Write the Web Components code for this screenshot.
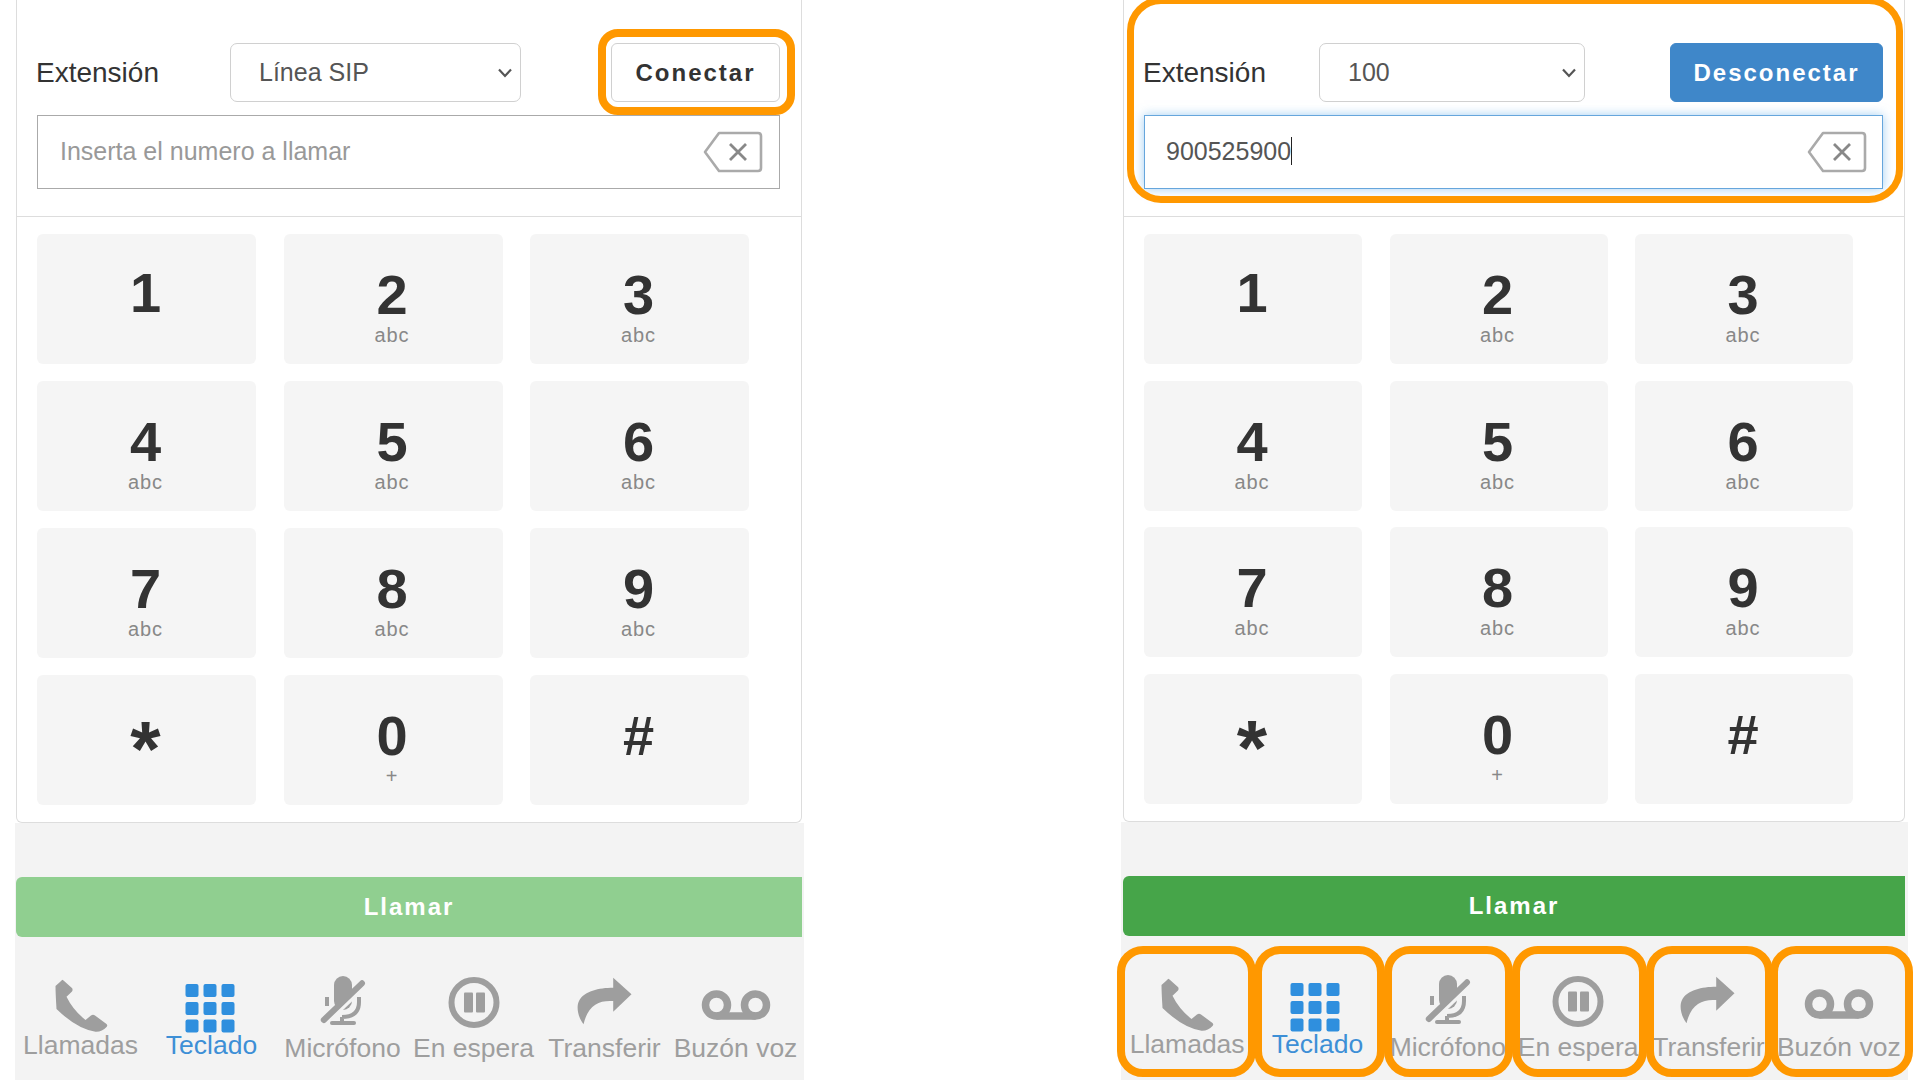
<!DOCTYPE html>
<html lang="es">
<head>
<meta charset="utf-8">
<title>Teclado SIP</title>
<style>
  html, body { margin: 0; height: 100%; background: #fff; }
  body { font-family: "Liberation Sans", Arial, sans-serif; overflow: hidden; }
</style>
</head>
<body>
<softphone-page></softphone-page>

<script>
// Icons of the bottom dock, all drawn in the same 80x60 box
const ICONS = {
  phone: `<path d="M21.8 5.7 30.2 13.3Q31 15 30 16.5L24.5 21.7Q31 35 43.5 45L49 40.5Q51 39 53 40.5L64.5 49Q66 50.5 64.5 52 60 57 53.5 56.7 35 54 14.5 34 13.5 18.3 13.5 11 19 6 20.5 4.8 21.8 5.7Z"/>`,
  grid: [9, 27, 44.5].map(y => [12.5, 30.5, 48.5].map(x =>
    `<rect x="${x}" y="${y}" width="13" height="13" rx="2"/>`).join('')).join(''),
  mic: `<path d="M30 10a9 9 0 0 1 18 0V26a9 9 0 0 1-18 0Z"/>
    <path d="M59 10.5 21 46.5" stroke="#f3f3f3" stroke-width="8"/>
    <path d="M58 8.3 19.8 45" stroke="currentColor" stroke-width="6" stroke-linecap="round"/>
    <path d="M55 22V27Q55 42 38 42M23 22V31M38 42V47" fill="none" stroke="currentColor" stroke-width="4"/>
    <path d="M28 48H50" stroke="currentColor" stroke-width="4" stroke-linecap="round"/>`,
  pause: `<circle cx="39" cy="27.5" r="22.5" fill="none" stroke="currentColor" stroke-width="6"/>
    <rect x="29" y="17.5" width="9" height="20" rx="1"/><rect x="41" y="17.5" width="9" height="20" rx="1"/>`,
  forward: `<path d="M47.2 2.7 65.5 19.3 47.2 36.7V26C33 25 22 30 17.5 49.3 12 42 10 32 13 26 18 16 33 12.7 47.2 12.7Z"/>`,
  voicemail: `<g fill="none" stroke="currentColor" stroke-width="7.5"><circle cx="19.5" cy="30" r="11"/><circle cx="58.5" cy="30" r="11"/><path d="M19.5 41H58.5"/></g>`
};

// One key of the dial pad: the digit goes in the slot, the letters in "sub"
class DialKey extends HTMLElement {
  connectedCallback() {
    const sub = this.getAttribute('sub');
    this.attachShadow({ mode: 'open' }).innerHTML = `
      <style>
        :host {
          display: block;
          height: var(--key-h);
          padding: 33px 2px 0 0;
          box-sizing: border-box;
          background: #f5f5f5;
          border-radius: 6px;
          text-align: center;
        }
        .digit { display: block; font-size: 56px; line-height: 56px; font-weight: 700; color: #333; }
        .sub { display: block; font-size: 20px; line-height: 24px; color: #888; letter-spacing: 1px; }
        :host([lift]) .digit { margin-top: -2px; }
        :host([star]) .digit { font-size: 78px; line-height: 78px; margin-top: 2px; }
      </style>
      <span class="digit"><slot></slot></span>
      ${sub ? `<span class="sub">${sub}</span>` : ''}
    `;
  }
}

// Entry of the bottom dock
class DockTab extends HTMLElement {
  connectedCallback() {
    this.attachShadow({ mode: 'open' }).innerHTML = `
      <style>
        :host {
          display: flex;
          flex-direction: column;
          align-items: center;
          position: relative;
          min-width: 0;
          color: #9e9e9e;
          padding-top: 38px;
        }
        :host([active]) { color: #2f8fde; }
        svg { display: block; flex: none; fill: currentColor; }
        .label {
          font-size: 26.5px;
          line-height: 30px;
          white-space: nowrap;
          margin: -5px 2px 0 0;
        }
        :host([active]) .label { color: #3d8fd6; }
        :host([low]) .label { margin-top: -2px; }
        /* orange annotation drawn on the screenshot */
        :host([mark])::after {
          content: '';
          position: absolute;
          top: 10px;
          height: 131px;
          left: var(--mark-l, 0);
          right: var(--mark-r, 0);
          box-sizing: border-box;
          border: 8px solid #ff9800;
          border-radius: 26px;
        }
      </style>
      <svg width="80" height="60" viewBox="0 0 80 60">${ICONS[this.getAttribute('icon')]}</svg>
      <span class="label"><slot></slot></span>
    `;
  }
}

// One whole softphone column
class PhonePanel extends HTMLElement {
  connectedCallback() {
    const connected = this.hasAttribute('connected');
    const keys = [
      ['1', '', 'lift'], ['2', 'abc'], ['3', 'abc'],
      ['4', 'abc'], ['5', 'abc'], ['6', 'abc'],
      ['7', 'abc'], ['8', 'abc'], ['9', 'abc'],
      ['*', '', 'star'], ['0', '+'], ['#', '']
    ];
    const marks = [['-6px', '-3px'], ['1px', '-1px'], ['0px', '1px'], ['-2px', '-3px'], ['2px', '2px'], ['-5px', '-8px']];
    const tabs = [
      ['phone', 'Llamadas', ''], ['grid', 'Teclado', 'active'], ['mic', 'Micrófono', 'low'],
      ['pause', 'En espera', 'low'], ['forward', 'Transferir', 'low'], ['voicemail', 'Buzón voz', 'low']
    ];

    this.attachShadow({ mode: 'open' }).innerHTML = `
      <style>
        :host { display: block; width: var(--panel-w); flex: none; color: #333; }
        .card {
          margin: 0 var(--inset-r) 0 var(--inset-l);
          background: #fff;
          border: 1px solid #ddd;
          border-top: 0;
          border-radius: 0 0 6px 6px;
        }
        .head {
          position: relative;
          padding: 43px 21px 27px 20px;
          border-bottom: 1px solid #ddd;
        }
        .row { display: flex; align-items: center; height: 59px; margin-bottom: 13px; }
        .ext { flex: 0 0 var(--label-w); font-size: 28px; margin-left: -1px; }
        .select {
          width: var(--select-w);
          height: 100%;
          box-sizing: border-box;
          display: flex;
          align-items: center;
          justify-content: space-between;
          padding: 0 6px 0 28px;
          border: 1px solid #d0d0d0;
          border-radius: 7px;
          background: #fff;
          font-size: 25px;
          color: #555;
        }
        .btn {
          position: relative;
          margin-left: auto;
          width: var(--btn-w);
          height: 100%;
          box-sizing: border-box;
          display: flex;
          align-items: center;
          justify-content: center;
          border: 1px solid #d0d0d0;
          border-radius: 6px;
          font-size: 24px;
          font-weight: 700;
          letter-spacing: 2px;
          color: #333;
          background: #fff;
        }
        .btn.on { background: #3f87c9; border-color: #3f87c9; color: #fff; }
        .btn.mark::after {
          content: '';
          position: absolute;
          inset: -15px -16px -14px -14px;
          border: 8px solid #ff9800;
          border-radius: 20px;
        }
        .number {
          height: 74px;
          box-sizing: border-box;
          display: flex;
          align-items: center;
          justify-content: space-between;
          padding: 0 16px 1px 22px;
          border: 1px solid #aaa;
          font-size: 25px;
          color: #999;
        }
        .number.on {
          padding-left: 21px;
          padding-right: 15px;
          border-color: #66a6dc;
          color: #555;
          box-shadow: 0 0 10px rgba(102, 175, 233, .6);
        }
        .caret { display: inline-block; width: 1px; height: 28px; background: #222; vertical-align: -5px; }
        .head.mark::after {
          content: '';
          position: absolute;
          inset: -3px 1px 13px 3px;
          border: 7px solid #ff9800;
          border-radius: 34px;
        }
        .pad {
          display: grid;
          grid-template-columns: repeat(3, var(--key-w));
          column-gap: var(--key-gap);
          row-gap: var(--row-gap);
          padding: 17px 0 17px 20px;
        }
        .dock { background: #f3f3f3; height: var(--dock-h); padding-top: 54px; box-sizing: border-box; }
        .call {
          margin: 0 var(--inset-r) 0 var(--inset-l);
          height: 60px;
          display: flex;
          align-items: center;
          justify-content: center;
          border-radius: 6px 0 0 6px;
          background: var(--call-bg);
          color: #fff;
          font-size: 24px;
          font-weight: 700;
          letter-spacing: 2px;
        }
        .tabs {
          margin: 0 var(--inset-r) 0 var(--inset-l);
          display: grid;
          grid-template-columns: repeat(6, 1fr);
        }
      </style>

      <div class="card">
        <div class="head ${connected ? 'mark' : ''}">
          <div class="row">
            <span class="ext">Extensión</span>
            <div class="select">
              <span>${this.getAttribute('line')}</span>
              <svg width="18" height="12" viewBox="0 0 18 12"><path d="M3 2.5 9 9l6-6.5" fill="none" stroke="#555" stroke-width="2.2"/></svg>
            </div>
            <div class="btn ${connected ? 'on' : 'mark'}">${connected ? 'Desconectar' : 'Conectar'}</div>
          </div>
          <div class="number ${connected ? 'on' : ''}">
            <span>${connected ? `${this.getAttribute('number')}<span class="caret"></span>` : 'Inserta el numero a llamar'}</span>
            <svg width="60" height="42" viewBox="0 0 60 42">
              <path d="M16 2H55Q58 2 58 5V37Q58 40 55 40H16L2 21Z" fill="none" stroke="#aaa" stroke-width="2.6" stroke-linejoin="round"/>
              <path d="M27 13 43 29M43 13 27 29" fill="none" stroke="#888" stroke-width="2.8"/>
            </svg>
          </div>
        </div>
        <div class="pad">
          ${keys.map(([d, s, flag]) => `<dial-key ${s ? `sub="${s}"` : ''} ${flag || ''}>${d}</dial-key>`).join('')}
        </div>
      </div>

      <div class="dock">
        <div class="call">Llamar</div>
        <div class="tabs">
          ${tabs.map(([icon, text, flag], i) => `<dock-tab icon="${icon}" ${flag} ${connected ? `mark style="--mark-l:${marks[i][0]};--mark-r:${marks[i][1]}"` : ''}>${text}</dock-tab>`).join('')}
        </div>
      </div>
    `;
  }
}

// The two screens side by side
class SoftphonePage extends HTMLElement {
  connectedCallback() {
    this.attachShadow({ mode: 'open' }).innerHTML = `
      <style>
        :host {
          display: flex;
          justify-content: space-between;
          align-items: flex-start;
          padding: 0 12px 0 15px;
          height: 1080px;
          box-sizing: border-box;
        }
        .off {
          --panel-w: 789px; --inset-l: 1px; --inset-r: 2px;
          --label-w: 194px; --select-w: 291px; --btn-w: 169px;
          --key-w: 219px; --key-gap: 27.5px; --key-h: 130px; --row-gap: 17px;
          --dock-h: 258px; --call-bg: #90cf90;
        }
        .on {
          --panel-w: 787px; --inset-l: 2px; --inset-r: 3px;
          --label-w: 176px; --select-w: 266px; --btn-w: 213px;
          --key-w: 218px; --key-gap: 27.5px; --key-h: 130px; --row-gap: 16.67px;
          --dock-h: 260px; --call-bg: #46a549;
        }
      </style>
      <phone-panel class="off" line="Línea SIP"></phone-panel>
      <phone-panel class="on" connected line="100" number="900525900"></phone-panel>
    `;
  }
}

customElements.define('dial-key', DialKey);
customElements.define('dock-tab', DockTab);
customElements.define('phone-panel', PhonePanel);
customElements.define('softphone-page', SoftphonePage);
</script>
</body>
</html>
